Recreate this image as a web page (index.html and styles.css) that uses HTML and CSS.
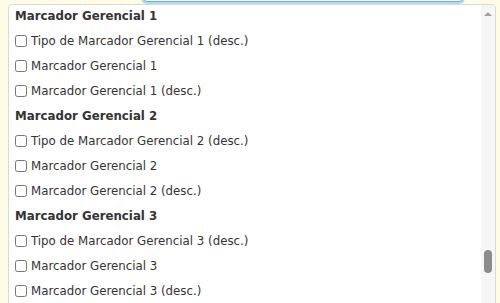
FILE: index.html
```html
<!DOCTYPE html>
<html lang="pt">
  <head>
    <meta charset="UTF-8" />
    <meta name="viewport" content="width=device-width, initial-scale=1.0" />
    <title>Marcadores</title>
    <link rel="stylesheet" href="styles.css">
  </head>
  <body>
    <div class="page">
      <div class="search-box"></div>

      <div class="dropdown">
        <ul class="option-list">
          <li class="group-title">Marcador Gerencial 1</li>
          <li class="option"><input type="checkbox"> Tipo de Marcador Gerencial 1 (desc.)</li>
          <li class="option"><input type="checkbox"> Marcador Gerencial 1</li>
          <li class="option"><input type="checkbox"> Marcador Gerencial 1 (desc.)</li>

          <li class="group-title">Marcador Gerencial 2</li>
          <li class="option"><input type="checkbox"> Tipo de Marcador Gerencial 2 (desc.)</li>
          <li class="option"><input type="checkbox"> Marcador Gerencial 2</li>
          <li class="option"><input type="checkbox"> Marcador Gerencial 2 (desc.)</li>

          <li class="group-title">Marcador Gerencial 3</li>
          <li class="option"><input type="checkbox"> Tipo de Marcador Gerencial 3 (desc.)</li>
          <li class="option"><input type="checkbox"> Marcador Gerencial 3</li>
          <li class="option"><input type="checkbox"> Marcador Gerencial 3 (desc.)</li>
        </ul>

        <!-- fake scrollbar, the list is longer than the box -->
        <div class="scrollbar">
          <span class="scroll-arrow"></span>
          <span class="scroll-thumb"></span>
        </div>
      </div>
    </div>
  </body>
</html>
```

FILE: styles.css
```css
* {
  margin: 0;
  padding: 0;
  box-sizing: border-box;
}

body {
  font-family: "DejaVu Sans", Verdana, sans-serif;
  font-size: 11.8px;
  background: #fffce6;
  color: #333;
  overflow: hidden;
}

.page {
  display: flex;
  flex-direction: column;
  height: 303px;
  overflow: hidden;
}

.search-box {
  flex-shrink: 0;
  margin-top: -28px;
  margin-left: 143px;
  width: 320px;
  height: 30px;
  background: #fff;
  border: 1px solid #66afe9;
  border-radius: 4px;
  box-shadow: 0 0 0 2px rgba(102, 175, 233, 0.45);
}

.dropdown {
  display: flex;
  flex-shrink: 0;
  margin-top: 2px;
  margin-left: 8px;
  width: 488px;
  height: 320px;
  background: #fff;
  border: 1px solid #d9d9d9;
  border-radius: 4px;
  overflow: hidden;
}

.option-list {
  flex: 1;
  list-style: none;
  margin-top: -2px;
  padding-left: 6px;
}

.group-title,
.option {
  display: flex;
  align-items: center;
  height: 25px;
  white-space: nowrap;
}

.group-title {
  font-weight: 700;
}

.option input {
  width: 12px;
  height: 12px;
  margin: 0 4px 0 0;
}

.scrollbar {
  width: 14px;
  background: #f6f6f6;
  display: flex;
  flex-direction: column;
  align-items: center;
}

.scroll-arrow {
  margin-top: 7px;
  width: 0;
  height: 0;
  border-left: 4px solid transparent;
  border-right: 4px solid transparent;
  border-bottom: 4px solid #a3a3a3;
}

.scroll-thumb {
  margin-top: 234px;
  width: 8px;
  height: 23px;
  border-radius: 4px;
  background: #8c8c8c;
}
```
